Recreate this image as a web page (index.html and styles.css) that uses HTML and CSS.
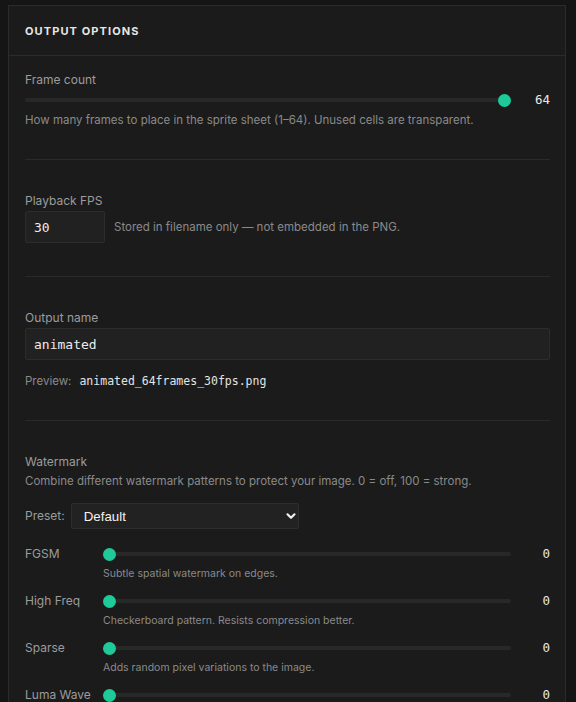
FILE: index.html
```html
<!DOCTYPE html>
<html lang="en">
<head>
<meta charset="utf-8">
<title>Output options</title>
<link rel="stylesheet" href="styles.css">
</head>
<body>
<div class="panel">
  <div class="panel-head">
    <h2 class="panel-title">Output Options</h2>
  </div>
  <div class="panel-body">
    <section class="group group-first">
      <label class="field-label" for="frames">Frame count</label>
      <div class="slider-row">
        <input class="range" id="frames" type="range" min="1" max="64" value="64">
        <span class="value">64</span>
      </div>
      <p class="hint">How many frames to place in the sprite sheet (1–64). Unused cells are transparent.</p>
    </section>

    <section class="group group-fps">
      <label class="field-label" for="fps">Playback FPS</label>
      <div class="inline-row">
        <input class="text-input fps-input" id="fps" type="text" value="30">
        <span class="hint">Stored in filename only — not embedded in the PNG.</span>
      </div>
    </section>

    <section class="group">
      <label class="field-label name-label" for="name">Output name</label>
      <input class="text-input name-input" id="name" type="text" value="animated">
      <p class="preview"><span class="preview-key">Preview:</span><code class="preview-file">animated_64frames_30fps.png</code></p>
    </section>

    <section class="group group-last">
      <div class="field-label">Watermark</div>
      <p class="hint wm-desc">Combine different watermark patterns to protect your image. 0 = off, 100 = strong.</p>
      <div class="preset-row">
        <label class="preset-label" for="preset">Preset:</label>
        <div class="select-wrap">
          <select class="select" id="preset">
            <option>Default</option>
            <option>Light</option>
            <option>Strong</option>
          </select>
          <svg class="chevron" viewBox="0 0 12 12" width="12" height="12" aria-hidden="true">
            <path d="M2.5 4.3 6 7.8 9.5 4.3" fill="none" stroke="#f0f0f0" stroke-width="2.2" stroke-linecap="round" stroke-linejoin="round"/>
          </svg>
        </div>
      </div>

      <div class="wm-list">
        <div class="wm-row">
          <span class="wm-name">FGSM</span>
          <input class="range" type="range" min="0" max="100" value="0">
          <span class="value">0</span>
          <p class="hint wm-hint">Subtle spatial watermark on edges.</p>
        </div>
        <div class="wm-row">
          <span class="wm-name">High Freq</span>
          <input class="range" type="range" min="0" max="100" value="0">
          <span class="value">0</span>
          <p class="hint wm-hint">Checkerboard pattern. Resists compression better.</p>
        </div>
        <div class="wm-row">
          <span class="wm-name">Sparse</span>
          <input class="range" type="range" min="0" max="100" value="0">
          <span class="value">0</span>
          <p class="hint wm-hint">Adds random pixel variations to the image.</p>
        </div>
        <div class="wm-row">
          <span class="wm-name">Luma Wave</span>
          <input class="range" type="range" min="0" max="100" value="0">
          <span class="value">0</span>
        </div>
      </div>
    </section>
  </div>
</div>
</body>
</html>
```

FILE: styles.css
```css
* {
  box-sizing: border-box;
}

html,
body {
  background: #151515;
}

body {
  margin: 0;
  padding: 5px 10px 0 8px;
  font-family: "Inter", "Noto Sans", sans-serif;
  font-size: 12px;
  line-height: 16px;
  color: #d8d8d8;
  overflow: hidden;
}

.panel {
  background: #1b1b1b;
  border: 1px solid #2b2b2b;
  border-bottom: 0;
}

.panel-head {
  height: 50px;
  padding: 0 16px;
  display: flex;
  align-items: center;
  border-bottom: 1px solid #2b2b2b;
}

.panel-title {
  margin: 0;
  font-size: 11px;
  font-weight: 700;
  letter-spacing: 1.1px;
  text-transform: uppercase;
  color: #e6e6e6;
}

.panel-body {
  padding: 0 15px 0 16px;
}

.group {
  padding: 33px 0 31px;
  border-bottom: 1px solid #2a2a2a;
}

.group-first {
  padding-top: 16px;
}

.group-fps {
  padding-top: 33px;
  padding-bottom: 33px;
}

.group-last {
  border-bottom: 0;
}

.field-label {
  display: block;
  color: #9c9c9c;
  font-size: 12px;
  line-height: 16px;
}

.hint {
  margin: 0;
  color: #8a8a8a;
  font-size: 11.5px;
  line-height: 16px;
}

/* range sliders */
.slider-row {
  display: flex;
  align-items: center;
  margin-top: 4px;
  height: 16px;
}

.slider-row + .hint {
  margin-top: 4px;
}

.range {
  -webkit-appearance: none;
  appearance: none;
  flex: 1;
  min-width: 0;
  height: 16px;
  margin: 0;
  background: transparent;
}

.range::-webkit-slider-runnable-track {
  height: 4px;
  background: #282828;
  border-radius: 2px;
}

.range::-webkit-slider-thumb {
  -webkit-appearance: none;
  width: 13px;
  height: 13px;
  margin-top: -4.5px;
  border-radius: 50%;
  background: #1fc99a;
  border: 0;
}

.value {
  width: 39px;
  text-align: right;
  font-family: "DejaVu Sans Mono", "Liberation Mono", monospace;
  font-size: 12.5px;
  color: #e8e8e8;
}

/* text inputs */
.inline-row {
  display: flex;
  align-items: center;
  gap: 9px;
  margin-top: 2px;
}

.text-input {
  height: 32px;
  padding: 0 8px;
  background: #212121;
  border: 1px solid #2c2c2c;
  border-radius: 2px;
  color: #ececec;
  font-family: "DejaVu Sans Mono", "Liberation Mono", monospace;
  font-size: 13px;
  outline: none;
}

.fps-input {
  width: 80px;
}

.name-label {
  margin-bottom: 2px;
}

.name-input {
  display: block;
  width: 100%;
}

.preview {
  margin: 13px 0 0;
  display: flex;
  align-items: baseline;
  gap: 8px;
}

.preview-key {
  color: #8a8a8a;
  font-size: 11.5px;
}

.preview-file {
  font-family: "DejaVu Sans Mono", "Liberation Mono", monospace;
  font-size: 11.5px;
  color: #e4e4e4;
}

/* watermark */
.wm-desc {
  margin-top: 3px;
}

.preset-row {
  display: flex;
  align-items: center;
  gap: 6px;
  margin-top: 14px;
}

.preset-label {
  color: #9c9c9c;
  font-size: 12px;
}

.select-wrap {
  position: relative;
  width: 228px;
}

.select {
  -webkit-appearance: none;
  appearance: none;
  display: block;
  width: 100%;
  height: 26px;
  padding: 0 28px 0 12px;
  background: #222;
  border: 1px solid #2e2e2e;
  border-radius: 2px;
  color: #f2f2f2;
  font-family: "Liberation Sans", Arial, sans-serif;
  font-size: 13.3px;
  outline: none;
}

.chevron {
  position: absolute;
  right: 2px;
  top: 7px;
  pointer-events: none;
}

.wm-list {
  margin-top: 17px;
  display: flex;
  flex-direction: column;
  gap: 11px;
}

.wm-row {
  display: grid;
  grid-template-columns: 78px 1fr 39px;
  grid-template-rows: 16px 16px;
  row-gap: 4px;
  align-items: center;
}

.wm-name {
  color: #9c9c9c;
  font-size: 12px;
}

.wm-row .value {
  width: auto;
}

.wm-hint {
  grid-column: 2 / 4;
  font-size: 10.5px;
}
```
